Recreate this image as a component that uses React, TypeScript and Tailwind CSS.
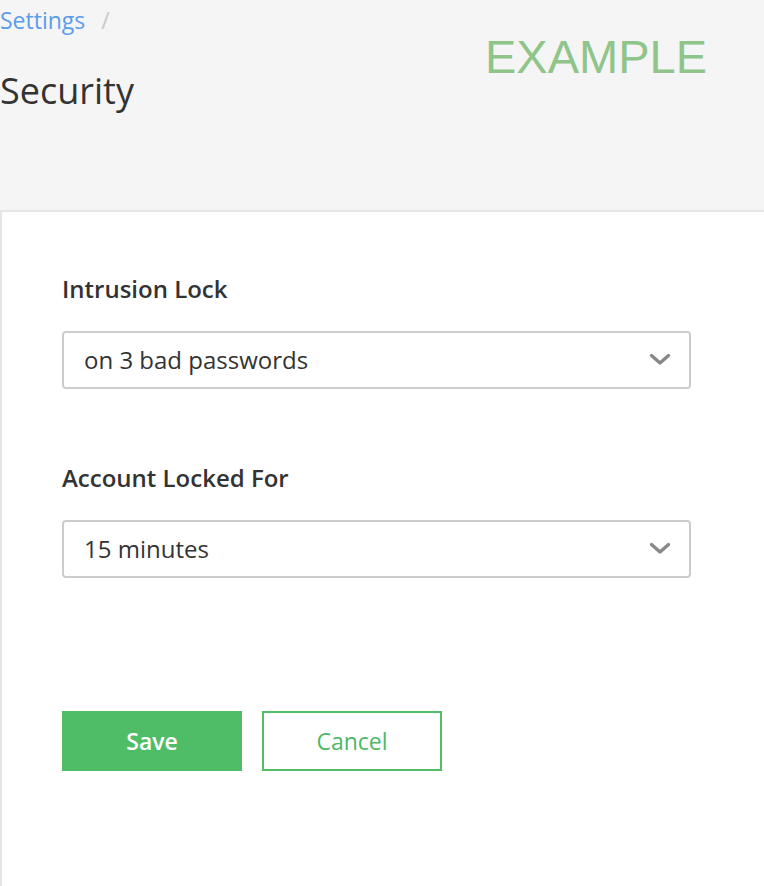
import { useState } from 'react'

const font = { fontFamily: '"Open Sans", "Liberation Sans", sans-serif' }

type Option = { id: string, label: string, value: string, choices: string[] }

const options: Option[] = [
  {
    id: 'intrusion',
    label: 'Intrusion Lock',
    value: 'on 3 bad passwords',
    choices: ['never', 'on 3 bad passwords', 'on 5 bad passwords', 'on 10 bad passwords'],
  },
  {
    id: 'locked',
    label: 'Account Locked For',
    value: '15 minutes',
    choices: ['5 minutes', '15 minutes', '30 minutes', '1 hour'],
  },
]

const Chevron = () => (
  <svg width="22" height="13" viewBox="0 0 22 13" className="pointer-events-none">
    <polyline points="2.5,2.5 11,10 19.5,2.5" fill="none" stroke="#888888" strokeWidth="3.4" strokeLinecap="round" strokeLinejoin="round" />
  </svg>
)

const SelectField = ({ item }: { item: Option }) => {
  const [value, setValue] = useState(item.value)

  return (
    <div>
      <label htmlFor={item.id} className="block text-[24px] leading-[32px] font-semibold text-[#333]">
        {item.label}
      </label>
      <div className="relative mt-[26px] w-[629px]">
        <select
          id={item.id}
          value={value}
          onChange={(e) => setValue(e.target.value)}
          className="appearance-none w-full h-[58px] pl-[20px] pr-12 rounded-[4px] border-2 border-[#cccccc] bg-white text-[24px] text-[#333] outline-none"
          style={font}
        >
          {item.choices.map((c) => (
            <option key={c} value={c}>{c}</option>
          ))}
        </select>
        <span className="absolute right-[20px] top-[22px]">
          <Chevron />
        </span>
      </div>
    </div>
  )
}

const App = () => {
  return (
    <div className="min-h-[886px] bg-white flex flex-col" style={font}>
      <header className="h-[212px] bg-[#f5f5f5] border-b-2 border-[#e6e6e6] flex">
        <div className="w-[485px]">
          <nav className="flex items-center gap-[16px] text-[23px] leading-[40px]">
            <a href="#" className="text-[#5b9de9]">Settings</a>
            <span className="text-[#c9c9c9]">/</span>
          </nav>
          <h1 className="mt-[29px] text-[36px] leading-[44px] font-normal text-[#333]">Security</h1>
        </div>
        <div
          className="pt-[33px] text-[47px] leading-none text-[#8fc58a]"
          style={{ fontFamily: '"Liberation Sans", Arial, sans-serif' }}
        >
          EXAMPLE
        </div>
      </header>

      <main className="flex-1 border-l-2 border-[#e6e6e6] pl-[60px] pt-[61px] pb-[80px]">
        <div className="flex flex-col gap-[73px]">
          {options.map((item) => (
            <SelectField key={item.id} item={item} />
          ))}
        </div>

        <div className="mt-[133px] flex gap-[20px]">
          <button className="w-[180px] h-[60px] bg-[#4fbd67] text-white text-[23px] font-semibold">
            Save
          </button>
          <button className="w-[180px] h-[60px] border-2 border-[#52bd69] bg-white text-[#4fb866] text-[23px]">
            Cancel
          </button>
        </div>
      </main>
    </div>
  )
}

export default App
